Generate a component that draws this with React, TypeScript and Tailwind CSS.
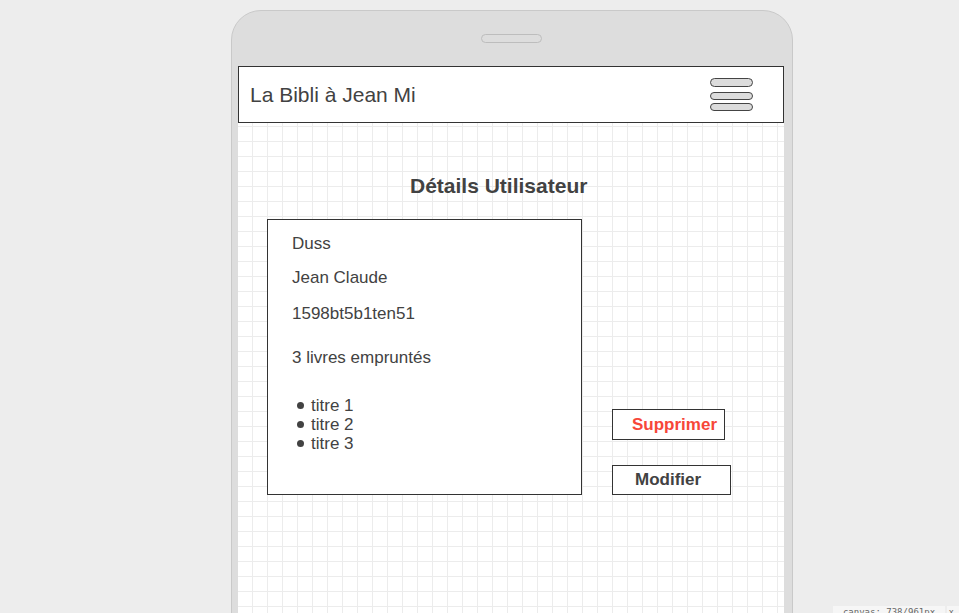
const font = { fontFamily: '"Liberation Sans", Arial, Helvetica, sans-serif' };

function MenuIcon() {
  return (
    <div className="flex flex-col" aria-label="menu">
      <span className="h-[9px] w-[43px] rounded-full border border-[#444] bg-[#dcdcdc]" />
      <span className="mt-[5px] h-[8px] w-[43px] rounded-full border border-[#444] bg-[#dcdcdc]" />
      <span className="mt-[3px] h-[8px] w-[43px] rounded-full border border-[#444] bg-[#dcdcdc]" />
    </div>
  );
}

function UserCard() {
  const titles = ["titre 1", "titre 2", "titre 3"];
  return (
    <div className="h-[276px] w-[315px] shrink-0 border border-[#333] bg-white pl-[24px] pt-[14px] text-[17px] leading-[20px] text-[#424242]">
      <p>Duss</p>
      <p className="mt-[14px]">Jean Claude</p>
      <p className="mt-[16px]">1598bt5b1ten51</p>
      <p className="mt-[24px]">3 livres empruntés</p>
      <ul className="mt-[28px] -ml-[24px] pl-[29px]">
        {titles.map((t) => (
          <li key={t} className="flex h-[19px] items-center gap-[7px] leading-[19px]">
            <span className="h-[7px] w-[7px] rounded-full bg-[#424242]" />
            <span>{t}</span>
          </li>
        ))}
      </ul>
    </div>
  );
}

export default function App() {
  return (
    <div className="relative h-[613px] w-[959px] overflow-hidden bg-[#ededed]" style={font}>
      <div className="ml-[231px] mt-[10px] flex h-[700px] w-[562px] flex-col rounded-t-[30px] border border-[#c9c9c9] bg-[#dddddd] pl-[6px] pr-[8px] pt-[23px]">
        <div className="mx-auto h-[9px] w-[61px] rounded-full border border-[#bdbdbd] bg-[#dddddd]" />

        <div className="mt-[23px] flex h-[57px] w-[546px] items-center justify-between border border-[#333] bg-white pl-[11px] pr-[30px]">
          <h1 className="text-[21px] text-[#424242]">La Bibli à Jean Mi</h1>
          <MenuIcon />
        </div>

        <main className="w-[546px] flex-1 bg-white bg-[linear-gradient(to_right,#ececec_1px,transparent_1px),linear-gradient(to_bottom,#ececec_1px,transparent_1px)] bg-[size:15px_15px] bg-[position:-1px_3px]">
          <h2 className="pl-[172px] pt-[51px] text-[21px] font-bold leading-[24px] text-[#424242]">
            Détails Utilisateur
          </h2>

          <div className="ml-[29px] mt-[21px] flex items-end gap-[30px]">
            <UserCard />
            <div className="flex flex-col">
              <button className="h-[31px] w-[113px] border border-[#333] bg-white pl-[19px] text-left text-[17px] font-bold text-[#f74739]">
                Supprimer
              </button>
              <button className="mt-[25px] h-[30px] w-[119px] border border-[#333] bg-white pl-[22px] text-left text-[17px] font-bold text-[#424242]">
                Modifier
              </button>
            </div>
          </div>
        </main>
      </div>

      <div className="absolute left-[833px] top-[606px] flex h-[20px] w-[112px] justify-center bg-[#f6f6f6] pt-[1px] text-[9px] leading-[10px] text-[#666]" style={{ fontFamily: '"DejaVu Sans Mono", monospace' }}>
        canvas: 738/961px
      </div>
      <div className="absolute left-[947px] top-[606px] h-[20px] w-[14px] bg-[#f6f6f6] pl-[2px] pt-[1px] text-[9px] leading-[10px] text-[#666]">
        x
      </div>
    </div>
  );
}
